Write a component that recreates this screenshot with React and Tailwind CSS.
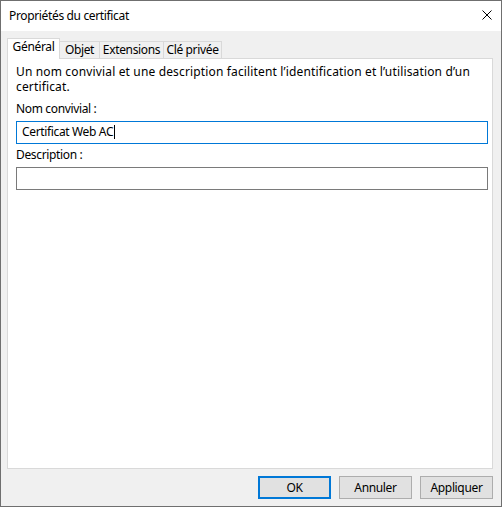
export default function App() {
  return (
    <div className="w-[502px] h-[507px] border border-[#6f6f6f] bg-[#f0f0f0] flex flex-col text-[12px] leading-[15px] tracking-[-0.35px] text-black font-['Noto_Sans','Open_Sans',sans-serif]">
      {/* Title bar */}
      <div className="h-[30px] bg-white flex items-start justify-between pl-[8px] pr-[9px] shrink-0">
        <span className="mt-[7px]">Propriétés du certificat</span>
        <svg width="10" height="10" viewBox="0 0 10 10" className="block mt-[9px]">
          <path d="M0.5 0.5 L9.5 9.5 M9.5 0.5 L0.5 9.5" stroke="#000" strokeWidth="1" fill="none" />
        </svg>
      </div>

      {/* Body */}
      <div className="flex-1 flex flex-col pt-[7px] pb-[7px] pl-[6px] pr-[8px]">
        {/* Tabs */}
        <div className="flex items-end h-[20px] relative z-10">
          <div className="w-[53px] h-[21px] -mb-px bg-white border-l border-t border-r border-[#d9d9d9] flex items-start justify-center">
            Général
          </div>
          <div className="w-[41px] h-[17px] -ml-px border-l border-t border-r border-[#d9d9d9] bg-[#f0f0f0] flex items-start justify-center">
            Objet
          </div>
          <div className="w-[65px] h-[17px] -ml-px border-l border-t border-r border-[#d9d9d9] bg-[#f0f0f0] flex items-start justify-center">
            Extensions
          </div>
          <div className="w-[59px] h-[17px] -ml-px border-l border-t border-r border-[#d9d9d9] bg-[#f0f0f0] flex items-start justify-center">
            Clé privée
          </div>
        </div>

        {/* Panel */}
        <div className="flex-1 bg-white border border-[#d9d9d9] pt-[5px] pl-[8px] pr-[5px]">
          <p className="tracking-[0.15px]">
            Un nom convivial et une description facilitent l’identification et l’utilisation d’un certificat.
          </p>
          <div className="mt-[7px]">Nom convivial :</div>
          <div className="mt-[5px] w-[472px] h-[23px] border border-[#0078d7] flex items-start pt-[2px] pl-[5px]">
            <span>Certificat Web AC</span>
            <span className="inline-block w-px h-[14px] mt-[1px] bg-black ml-[1px]"></span>
          </div>
          <div className="mt-[3px]">Description :</div>
          <div className="mt-[5px] w-[472px] h-[23px] border border-[#7a7a7a]"></div>
        </div>

        {/* Buttons */}
        <div className="flex justify-end gap-[8px] mt-[7px] h-[23px]">
          <button className="w-[73px] h-[23px] bg-[#e1e1e1] border-2 border-[#0078d7] flex items-center justify-center">
            OK
          </button>
          <button className="w-[73px] h-[23px] bg-[#e1e1e1] border border-[#adadad] flex items-center justify-center">
            Annuler
          </button>
          <button className="w-[73px] h-[23px] bg-[#e1e1e1] border border-[#adadad] flex items-center justify-center">
            Appliquer
          </button>
        </div>
      </div>
    </div>
  );
}
